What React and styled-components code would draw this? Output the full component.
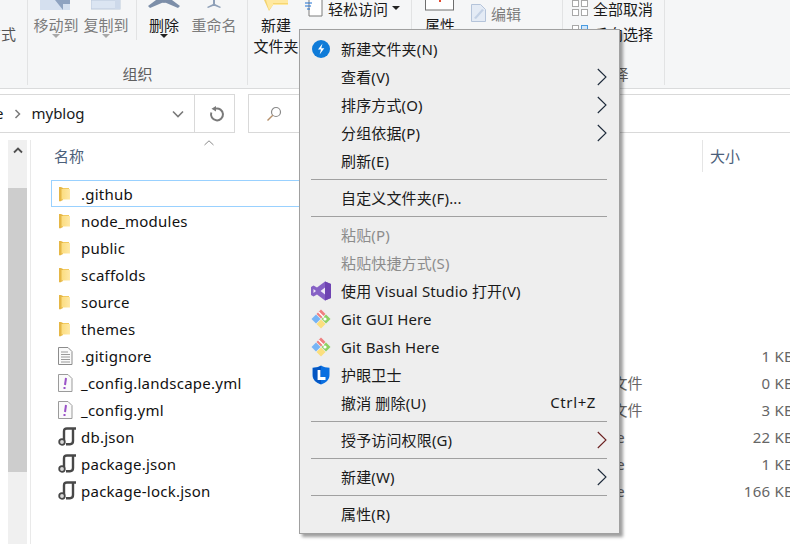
import React from "react";
import styled, { createGlobalStyle } from "styled-components";

const GlobalStyle = createGlobalStyle`
  html, body {
    margin: 0;
    padding: 0;
    background: #fff;
  }
  body {
    font-family: "Noto Sans", "Noto Sans CJK SC", sans-serif;
    font-size: 15px;
    color: #1a1a1a;
  }
`;

const Page = styled.div`
  position: relative;
  width: 790px;
  height: 544px;
  overflow: hidden;
  background: #fff;
`;

/* ribbon */
const Ribbon = styled.div`
  display: flex;
  height: 88px;
  background: #f5f6f7;
  border-bottom: 1px solid #dadbdc;
`;

const Group = styled.div`
  display: flex;
  flex-direction: column;
  flex: none;
  width: ${(p) => p.$width}px;
  height: 85px;
  border-right: 1px solid #e2e3e4;
  overflow: hidden;
`;

const GroupBody = styled.div`
  flex: 1;
  display: flex;
  align-items: flex-start;
  min-height: 0;
  padding-left: ${(p) => p.$pad || 0}px;
`;

const GroupLabel = styled.div`
  height: 20px;
  line-height: 18px;
  text-align: center;
  color: #5f5f5f;
  white-space: nowrap;
`;

const ClippedWord = styled.div`
  margin: 24px 0 0 -14px;
  line-height: 21px;
  color: #555;
  white-space: nowrap;
`;

const LargeButton = styled.div`
  flex: none;
  width: ${(p) => p.$width || 44}px;
  margin-left: ${(p) => p.$left || 0}px;
  display: flex;
  flex-direction: column;
  align-items: center;
  color: ${(p) => (p.$disabled ? "#7c7c7c" : "#1a1a1a")};
`;

const IconZone = styled.div`
  height: 15px;
  display: flex;
  align-items: flex-start;
  justify-content: center;
`;

const ButtonLine = styled.div`
  line-height: 21px;
  white-space: nowrap;
`;

const DownCaret = styled.div`
  width: 0;
  height: 0;
  margin-top: ${(p) => p.$top || 0}px;
  margin-left: ${(p) => p.$left || 0}px;
  border-left: 4px solid transparent;
  border-right: 4px solid transparent;
  border-top: 4px solid ${(p) => p.$color || "#222"};
`;

const GroupDivider = styled.div`
  flex: none;
  width: 1px;
  height: 40px;
  margin: 0 ${(p) => p.$right}px 0 ${(p) => p.$left}px;
  background: #e2e3e4;
`;

const SmallStack = styled.div`
  display: flex;
  flex-direction: column;
  gap: 7px;
  margin-top: -1px;
  padding-top: ${(p) => p.$top || 0}px;
  margin-left: ${(p) => p.$left || 0}px;
`;

const SmallButton = styled.div`
  display: flex;
  align-items: center;
  height: 18px;
  gap: 5px;
  white-space: nowrap;
  color: ${(p) => (p.$disabled ? "#7c7c7c" : "#1a1a1a")};
`;

/* address row */
const AddressRow = styled.div`
  display: flex;
  gap: 13px;
  margin-top: 5px;
  height: 39px;
`;

const AddressBox = styled.div`
  flex: none;
  width: 236px;
  margin-left: -1px;
  display: flex;
  align-items: center;
  box-sizing: border-box;
  border: 1px solid #d9d9d9;
  overflow: hidden;
`;

const PathText = styled.span`
  line-height: 37px;
  margin-left: ${(p) => p.$left || 0}px;
  color: #1a1a1a;
`;

const PathArrow = styled.svg`
  flex: none;
  margin: 0 ${(p) => p.$right}px 0 ${(p) => p.$left}px;
`;

const RefreshCell = styled.div`
  flex: none;
  width: 38px;
  height: 37px;
  padding-left: 7px;
  box-sizing: border-box;
  display: flex;
  align-items: center;
  justify-content: center;
  border-left: 1px solid #d9d9d9;
`;

const SearchBox = styled.div`
  flex: 1;
  margin-right: -2px;
  display: flex;
  align-items: center;
  padding-left: 17px;
  border: 1px solid #d9d9d9;
  box-sizing: border-box;
`;

/* list */
const Body = styled.div`
  display: flex;
  height: 411px;
  padding: 7px 0 0 8px;
  box-sizing: border-box;
`;

const ScrollTrack = styled.div`
  flex: none;
  width: 19px;
  background: #f0f0f0;
  display: flex;
  flex-direction: column;
`;

const ScrollArrow = styled.div`
  height: 20px;
  display: flex;
  align-items: center;
  justify-content: center;
`;

const ScrollThumb = styled.div`
  height: 284px;
  margin-top: 28px;
  background: #cdcdcd;
`;

const ListPane = styled.div`
  flex: none;
  width: 780px;
  margin-left: 3px;
  border-left: 1px solid #e9e9e9;
`;

const HeaderRow = styled.div`
  display: flex;
  height: 32px;
`;

const NameHeader = styled.div`
  position: relative;
  flex: none;
  width: 671px;
  box-sizing: border-box;
  padding-left: 23px;
  line-height: 32px;
  color: #4c607a;
`;

const SortMark = styled.svg`
  position: absolute;
  left: 173px;
  top: 0;
`;

const SizeHeader = styled.div`
  flex: none;
  padding-left: 7px;
  line-height: 32px;
  border-left: 1px solid #e5e5e5;
  color: #4c607a;
`;

const FileList = styled.div`
  padding: 8px 0 0 20px;
`;

const FileRow = styled.div`
  display: grid;
  grid-template-columns: 519px 132px 92px;
  height: 27px;
  align-items: center;
`;

const NameCell = styled.div`
  display: flex;
  align-items: center;
  height: 27px;
  box-sizing: border-box;
  padding-left: 7px;
  border: 1px solid ${(p) => (p.$selected ? "#99d1ff" : "transparent")};
  color: #111;
  letter-spacing: 0.25px;
  white-space: nowrap;
`;

const FileGlyph = styled.div`
  flex: none;
  width: 23px;
  height: 20px;
  margin-left: -1px;
  display: flex;
  align-items: center;
`;

const TypeCell = styled.div`
  margin-left: ${(p) => p.$nudge || 0}px;
  color: #666;
  white-space: nowrap;
`;

const SizeCell = styled.div`
  color: #666;
  letter-spacing: 0.25px;
  text-align: right;
  white-space: nowrap;
`;

/* context menu */
const Menu = styled.div`
  position: absolute;
  left: 299px;
  top: 29px;
  width: 321px;
  box-sizing: border-box;
  padding: 5px;
  background: #eeeeee;
  border: 1px solid #a0a0a0;
  box-shadow: 3px 3px 3px rgba(0, 0, 0, 0.38);
`;

const MenuRow = styled.div`
  display: flex;
  align-items: center;
  height: 28px;
  color: ${(p) => (p.$disabled ? "#8c8c8c" : "#1a1a1a")};
  white-space: nowrap;
`;

const MenuIcon = styled.div`
  flex: none;
  width: 36px;
  height: 20px;
  padding-left: 6px;
  box-sizing: border-box;
`;

const MenuLabel = styled.span`
  margin-bottom: ${(p) => (p.$latin ? 0 : 2)}px;
  letter-spacing: 0.15px;
`;

const Shortcut = styled.span`
  margin: 0 18px 2px auto;
  letter-spacing: 0.6px;
`;

const SubArrow = styled.svg`
  flex: none;
  margin: 0 7px 0 auto;
`;

const MenuSeparator = styled.div`
  height: 1px;
  margin: 4px 7px 4px 6px;
  background: #a0a0a0;
`;

/* drawings */
const CutArrowIcon = () => (
  <svg width="32" height="11" viewBox="0 0 32 11">
    <rect x="0" y="0" width="30" height="10" fill="#d5e0ef" />
    <path d="M15 0h15v4h-7v6z" fill="#8fa3c0" />
  </svg>
);

const CopyPageIcon = () => (
  <svg width="30" height="10" viewBox="0 0 30 10">
    <rect x="0" y="0" width="29" height="9" fill="#dbe5f2" stroke="#bcc9dc" />
    <rect x="24" y="0" width="5" height="9" fill="#cdd9ea" />
  </svg>
);

const DeleteIcon = () => (
  <svg width="32" height="8" viewBox="0 0 32 8">
    <path d="M8 0 0 6l2 2 14-6 14 6 2-2-8-6z" fill="#7d8fa9" />
    <path d="M8 0h16l-8 3z" fill="#7d8fa9" />
  </svg>
);

const RenameIcon = () => (
  <svg width="16" height="8" viewBox="0 0 16 8">
    <path d="M7 0h2v4l6 3-1 1-5-2H7L2 8 1 7l6-3z" fill="#8fa0b8" />
  </svg>
);

const NewFolderIcon = () => (
  <svg width="24" height="11" viewBox="0 0 24 11">
    <path d="M0 0h24v5H9L5 11z" fill="#f3d36f" />
    <path d="M2 0h22v5H9L5 10z" fill="#ffe9a0" />
    <path d="M9 3h15v1H9z" fill="#f6d672" />
  </svg>
);

const EasyAccessIcon = () => (
  <svg width="18" height="18" viewBox="0 0 18 18">
    <path d="M4 0v17h13V0" fill="#fff" stroke="#7c7c7c" />
    <path d="M0 4h7M0 7h6M2 10h3" stroke="#1c6fd0" strokeWidth="1" />
  </svg>
);

const PropertyIcon = () => (
  <svg width="30" height="11" viewBox="0 0 30 11">
    <rect x="0.5" y="-2" width="28" height="12" fill="#fff" stroke="#6e6e6e" />
    <rect x="14" y="0" width="2" height="2" fill="#e2492f" />
  </svg>
);

const EditIcon = () => (
  <svg width="15" height="18" viewBox="0 0 15 18">
    <path d="M.5.5h9l5 5v12H.5z" fill="#e4ebf5" stroke="#b5c4da" />
    <path d="M3 14 11 5l2 1-8 9z" fill="#c3d1e5" />
  </svg>
);

const SelectGridIcon = ({ accent }) => (
  <svg width="16" height="16" viewBox="0 0 16 16">
    <rect x="0.5" y="0.5" width="6" height="6" fill="#fff" stroke="#a8a8a8" />
    <rect x="9.5" y="0.5" width="6" height="6" fill={accent ? "#cfe6fb" : "#fff"} stroke={accent ? "#4a9be0" : "#a8a8a8"} />
    <rect x="0.5" y="9.5" width="6" height="6" fill="#fff" stroke="#a8a8a8" />
    <rect x="9.5" y="9.5" width="6" height="6" fill="#fff" stroke="#a8a8a8" />
  </svg>
);

const FolderIcon = () => (
  <svg width="13" height="16" viewBox="0 0 13 16">
    <defs>
      <linearGradient id="folderFill" x1="0" x2="1" y1="0" y2="0">
        <stop offset="0" stopColor="#fbdc7e" />
        <stop offset="1" stopColor="#ffe9a8" />
      </linearGradient>
    </defs>
    <path d="M1 1h2l2 1v12l-3 1.500-1-.500z" fill="#e6b746" />
    <path d="M3.500 3H12v10.500H3.500z" fill="url(#folderFill)" />
    <path d="M5 2h6v1H5z" fill="#f2ca5e" />
  </svg>
);

const TextFileIcon = () => (
  <svg width="15" height="18" viewBox="0 0 15 18">
    <path d="M.5.5h9.500l4 4v13H.5z" fill="#fafafa" stroke="#8c8c8c" />
    <path d="M3 5h7M3 7.500h9M3 10h9M3 12.500h9M3 15h9" stroke="#9a9a9a" />
  </svg>
);

const ConfigFileIcon = () => (
  <svg width="15" height="18" viewBox="0 0 15 18">
    <path d="M.5.5h9.500l4 4v13H.5z" fill="#fafafa" stroke="#9b9b9b" />
    <path d="M8 4 7 11" stroke="#9a52c8" strokeWidth="2" />
    <rect x="5.500" y="13" width="2" height="2" fill="#9a52c8" />
  </svg>
);

const ScriptFileIcon = () => (
  <svg width="19" height="19" viewBox="0 0 19 19">
    <path d="M6 13V4.500C6 2.500 7 1.500 9 1.500h9" fill="none" stroke="#484848" strokeWidth="2.400" />
    <path d="M15 2v12c0 2-1 3.200-3 3.200H8" fill="none" stroke="#484848" strokeWidth="2.400" />
    <circle cx="4" cy="15" r="2.800" fill="#d9d9d9" stroke="#484848" strokeWidth="1.800" />
  </svg>
);

const BoltIcon = () => (
  <svg width="20" height="20" viewBox="0 0 20 20">
    <circle cx="10" cy="10" r="9" fill="#0f7bd8" />
    <path d="M11.500 4.500 7 10.500h3l-1.400 5 4.700-6.200h-3z" fill="#fff" />
  </svg>
);

const VisualStudioIcon = () => (
  <svg width="20" height="20" viewBox="0 0 20 20">
    <path d="M14 0.500 20 3v14l-6 2.500-8-6-3.500 2L0 14V6l2.500-1.500 3.500 2z" fill="#8661c5" />
    <path d="M14 .5 20 3v14l-6 2.500z" fill="#6f44b2" />
    <path d="M14 6.500 9.500 10l4.500 3.500zM2.500 8v4L5 10z" fill="#efeaf7" />
  </svg>
);

const GitIcon = () => (
  <svg width="20" height="20" viewBox="0 0 20 20">
    <path d="M10 0.500 14.500 5 10 9.500 5.500 5z" fill="#ef7f7f" />
    <path d="M5 5.500 9.500 10 5 14.500.5 10z" fill="#76b4f5" />
    <path d="M15 5.500 19.500 10 15 14.500 10.500 10z" fill="#8ed162" />
    <path d="M10 10.500 14.500 15 10 19.500 5.500 15z" fill="#fbdf7e" />
    <path d="M7.500 3 13 8.500" stroke="#fff" strokeWidth="1.400" />
    <circle cx="14" cy="10" r="1.600" fill="#fff" />
  </svg>
);

const GuardIcon = () => (
  <svg width="20" height="20" viewBox="0 0 20 20">
    <path d="M10 0.500c2.500 1.500 5.500 2.200 8.500 2.200V10c0 4.500-3.500 8-8.500 9.500C5 18 1.500 14.500 1.500 10V2.700c3 0 6-.7 8.500-2.200z" fill="#0a6fe0" />
    <path d="M2 3c3 0 5.500-.7 8-2v18C5 17.500 2 14 2 10z" fill="#0556c2" />
    <path d="M8 5v8.500h6.500" fill="none" stroke="#fff" strokeWidth="2.800" />
  </svg>
);

const RefreshIcon = () => (
  <svg width="16" height="16" viewBox="0 0 16 16">
    <path d="M6.500 2.600A6 6 0 1 1 2.300 6.500" fill="none" stroke="#7a7a7a" strokeWidth="2" />
    <path d="M7 0v5.500L2.500 2.800z" fill="#7a7a7a" />
  </svg>
);

const SearchIcon = () => (
  <svg width="16" height="16" viewBox="0 0 16 16">
    <circle cx="10" cy="6" r="4.500" fill="none" stroke="#8a8a8a" strokeWidth="1.200" />
    <path d="M6.800 9.200 1.500 14.500" stroke="#b58f6a" strokeWidth="1.400" />
  </svg>
);

const Chevron = ({ color }) => (
  <SubArrow width="10" height="18" viewBox="0 0 10 18">
    <path d="M.8 1 9 9 .8 17" fill="none" stroke={color || "#1d2a3a"} strokeWidth="1.100" />
  </SubArrow>
);

const fileIcons = {
  folder: FolderIcon,
  text: TextFileIcon,
  config: ConfigFileIcon,
  script: ScriptFileIcon,
};

const files = [
  { name: ".github", icon: "folder", selected: true },
  { name: "node_modules", icon: "folder" },
  { name: "public", icon: "folder" },
  { name: "scaffolds", icon: "folder" },
  { name: "source", icon: "folder" },
  { name: "themes", icon: "folder" },
  { name: ".gitignore", icon: "text", size: "1 KB" },
  { name: "_config.landscape.yml", icon: "config", type: "YAML 文件", size: "0 KB" },
  { name: "_config.yml", icon: "config", type: "YAML 文件", size: "3 KB" },
  { name: "db.json", icon: "script", type: "JSON file", nudge: -6, size: "22 KB" },
  { name: "package.json", icon: "script", type: "JSON file", nudge: -6, size: "1 KB" },
  { name: "package-lock.json", icon: "script", type: "JSON file", nudge: -6, size: "166 KB" },
];

const menuBlocks = [
  [
    { label: "新建文件夹(N)", icon: BoltIcon },
    { label: "查看(V)", sub: true },
    { label: "排序方式(O)", sub: true },
    { label: "分组依据(P)", sub: true },
    { label: "刷新(E)" },
  ],
  [{ label: "自定义文件夹(F)..." }],
  [
    { label: "粘贴(P)", disabled: true },
    { label: "粘贴快捷方式(S)", disabled: true },
    { label: "使用 Visual Studio 打开(V)", icon: VisualStudioIcon },
    { label: "Git GUI Here", icon: GitIcon, latin: true },
    { label: "Git Bash Here", icon: GitIcon, latin: true },
    { label: "护眼卫士", icon: GuardIcon },
    { label: "撤消 删除(U)", shortcut: "Ctrl+Z" },
  ],
  [{ label: "授予访问权限(G)", sub: true, subColor: "#6b2020" }],
  [{ label: "新建(W)", sub: true }],
  [{ label: "属性(R)" }],
];

const App = () => {
  return (
    <Page>
      <GlobalStyle />
      <Ribbon>
        <Group $width={27}>
          <GroupBody>
            <ClippedWord>方式</ClippedWord>
          </GroupBody>
        </Group>
        <Group $width={219}>
          <GroupBody $pad={6}>
            <LargeButton $disabled>
              <IconZone>
                <CutArrowIcon />
              </IconZone>
              <ButtonLine>移动到</ButtonLine>
              <DownCaret $color="#a8a8a8" $top={-2} />
            </LargeButton>
            <LargeButton $disabled $left={6}>
              <IconZone>
                <CopyPageIcon />
              </IconZone>
              <ButtonLine>复制到</ButtonLine>
              <DownCaret $color="#a8a8a8" $top={-2} />
            </LargeButton>
            <GroupDivider $left={8} $right={12} />
            <LargeButton $width={30}>
              <IconZone>
                <DeleteIcon />
              </IconZone>
              <ButtonLine>删除</ButtonLine>
              <DownCaret $top={-2} />
            </LargeButton>
            <LargeButton $disabled $left={13}>
              <IconZone>
                <RenameIcon />
              </IconZone>
              <ButtonLine>重命名</ButtonLine>
            </LargeButton>
          </GroupBody>
          <GroupLabel>组织</GroupLabel>
        </Group>
        <Group $width={163}>
          <GroupBody $pad={6}>
            <LargeButton>
              <IconZone>
                <NewFolderIcon />
              </IconZone>
              <ButtonLine>新建</ButtonLine>
              <ButtonLine>文件夹</ButtonLine>
            </LargeButton>
            <SmallStack $left={7}>
              <SmallButton>
                <EasyAccessIcon />
                轻松访问
                <DownCaret $left={-1} />
              </SmallButton>
            </SmallStack>
          </GroupBody>
        </Group>
        <Group $width={150}>
          <GroupBody $pad={13}>
            <LargeButton $width={30}>
              <IconZone>
                <PropertyIcon />
              </IconZone>
              <ButtonLine>属性</ButtonLine>
            </LargeButton>
            <SmallStack $left={16} $top={5}>
              <SmallButton $disabled>
                <EditIcon />
                编辑
              </SmallButton>
            </SmallStack>
          </GroupBody>
        </Group>
        <Group $width={101}>
          <GroupBody $pad={9}>
            <SmallStack>
              <SmallButton>
                <SelectGridIcon />
                全部取消
              </SmallButton>
              <SmallButton>
                <SelectGridIcon accent />
                反向选择
              </SmallButton>
            </SmallStack>
          </GroupBody>
          <GroupLabel>选择</GroupLabel>
        </Group>
      </Ribbon>

      <AddressRow>
        <AddressBox>
          <PathText $left={-5}>e</PathText>
          <PathArrow $left={11} $right={10} width="7" height="10" viewBox="0 0 7 10">
            <path d="M1.500 1 5.500 5 1.500 9" fill="none" stroke="#7a7a7a" strokeWidth="1.500" />
          </PathArrow>
          <PathText>myblog</PathText>
          <PathArrow $left={87} $right={10} width="12" height="8" viewBox="0 0 12 8">
            <path d="M1 1.500 6 6.500l5-5" fill="none" stroke="#7a7a7a" strokeWidth="1.600" />
          </PathArrow>
          <RefreshCell>
            <RefreshIcon />
          </RefreshCell>
        </AddressBox>
        <SearchBox>
          <SearchIcon />
        </SearchBox>
      </AddressRow>

      <Body>
        <ScrollTrack>
          <ScrollArrow>
            <svg width="10" height="7" viewBox="0 0 10 7">
              <path d="M1 5.500 5 1.500l4 4" fill="none" stroke="#505050" strokeWidth="1.800" />
            </svg>
          </ScrollArrow>
          <ScrollThumb />
        </ScrollTrack>
        <ListPane>
          <HeaderRow>
            <NameHeader>
              名称
              <SortMark width="10" height="6" viewBox="0 0 10 6">
                <path d="M.5 5 5 .8 9.500 5" fill="none" stroke="#8a8a8a" />
              </SortMark>
            </NameHeader>
            <SizeHeader>大小</SizeHeader>
          </HeaderRow>
          <FileList>
            {files.map((file) => {
              const Glyph = fileIcons[file.icon];
              return (
                <FileRow key={file.name}>
                  <NameCell $selected={file.selected}>
                    <FileGlyph>
                      <Glyph />
                    </FileGlyph>
                    {file.name}
                  </NameCell>
                  <TypeCell $nudge={file.nudge}>{file.type}</TypeCell>
                  <SizeCell>{file.size}</SizeCell>
                </FileRow>
              );
            })}
          </FileList>
        </ListPane>
      </Body>

      <Menu>
        {menuBlocks.map((block, i) => (
          <React.Fragment key={i}>
            {i > 0 && <MenuSeparator />}
            {block.map((item) => {
              const Icon = item.icon;
              return (
                <MenuRow key={item.label} $disabled={item.disabled}>
                  <MenuIcon>{Icon && <Icon />}</MenuIcon>
                  <MenuLabel $latin={item.latin}>{item.label}</MenuLabel>
                  {item.shortcut && <Shortcut>{item.shortcut}</Shortcut>}
                  {item.sub && <Chevron color={item.subColor} />}
                </MenuRow>
              );
            })}
          </React.Fragment>
        ))}
      </Menu>
    </Page>
  );
};

export default App;
